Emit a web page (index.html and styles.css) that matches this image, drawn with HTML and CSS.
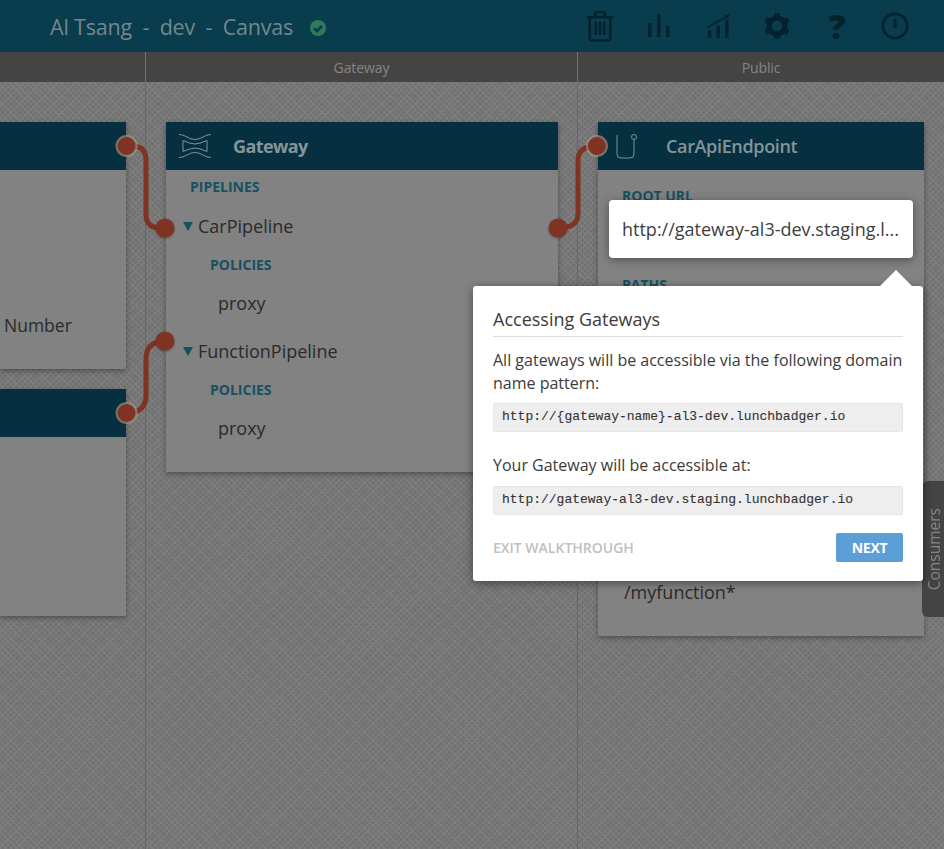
FILE: index.html
```html
<!DOCTYPE html>
<html lang="en">
<head>
<meta charset="UTF-8">
<title>Al Tsang - dev - Canvas</title>
<link rel="stylesheet" href="styles.css">
</head>
<body>

<header class="topbar">
    <div class="topbar-title">
        <span>Al Tsang</span><span>-</span><span>dev</span><span>-</span><span>Canvas</span>
        <svg class="status-icon" width="16" height="16" viewBox="0 0 16 16">
            <circle cx="8" cy="8" r="8" fill="#2f7a58"/>
            <path d="M4 8.200l3 3 5-5.400" fill="none" stroke="#093c4d" stroke-width="2.600"/>
        </svg>
    </div>
    <nav class="topbar-icons">
        <svg width="28" height="32" viewBox="0 0 30 34" fill="none" stroke="#04222e" stroke-width="2.800">
            <path d="M1 7.500h28M10 7V3.500q0-1.500 1.500-1.500h7q1.500 0 1.500 1.500V7M4 8v22q0 2.500 2.500 2.500h17q2.500 0 2.500-2.500V8"/>
            <path d="M10.500 12.500v14M15 12.500v14M19.500 12.500v14"/>
        </svg>
        <svg width="22" height="24" viewBox="0 0 22 24" fill="#04222e">
            <rect x="0" y="9" width="3.500" height="14"/>
            <rect x="9" y="0" width="3.500" height="23"/>
            <rect x="18" y="12" width="3.500" height="11"/>
        </svg>
        <svg class="icon-wide" width="23" height="25" viewBox="0 0 24 26" fill="#04222e">
            <rect x="1" y="17" width="3.500" height="8"/>
            <rect x="10" y="12" width="3.500" height="13"/>
            <rect x="19" y="6" width="3.500" height="19"/>
            <path d="M0 13L19 2.500l-1-1.500 6-.5-3 5-1-1.600L1 14.500z"/>
        </svg>
        <svg width="26" height="26" viewBox="0 0 28 28">
            <path d="M14 5.500a8.500 8.500 0 1 1 0 17a8.500 8.500 0 1 1 0-17z" fill="none" stroke="#04222e" stroke-width="5.500"/>
            <g fill="#04222e">
                <rect x="11" y="0" width="6" height="5" rx="1"/>
                <rect x="11" y="23" width="6" height="5" rx="1"/>
                <rect x="11" y="0" width="6" height="5" rx="1" transform="rotate(60 14 14)"/>
                <rect x="11" y="0" width="6" height="5" rx="1" transform="rotate(120 14 14)"/>
                <rect x="11" y="0" width="6" height="5" rx="1" transform="rotate(240 14 14)"/>
                <rect x="11" y="0" width="6" height="5" rx="1" transform="rotate(300 14 14)"/>
            </g>
        </svg>
        <span class="help-mark icon-wide">?</span>
        <svg width="28" height="28" viewBox="0 0 30 30" fill="none" stroke="#04222e" stroke-width="3">
            <circle cx="15" cy="15" r="13"/>
            <path d="M15 7.500v10" stroke-width="3.400"/>
        </svg>
    </nav>
</header>

<div class="zonebar">
    <div class="zone"></div>
    <div class="zone">Gateway</div>
    <div class="zone">Public</div>
</div>

<main class="canvas">
    <section class="column">
        <div class="card card-cut card-first">
            <div class="card-head"></div>
            <div class="card-body card-number">Number</div>
        </div>
        <div class="card card-cut card-second">
            <div class="card-head"></div>
        </div>
    </section>

    <section class="column">
        <div class="card card-gateway">
            <div class="card-head">
                <svg class="card-icon" width="34" height="26" viewBox="0 0 34 26" fill="none" stroke="#7f9299" stroke-width="1">
                    <path d="M1 1.500q4 0 8 2.500t8 2.500 8-2.500 8-2.500M1 24.500q4 0 8-2.500t8-2.500 8 2.500 8 2.500"/>
                    <path d="M5 7.500q8 3.500 12 3.500t12-3.500M5 18.500q8-3.500 12-3.500t12 3.500"/>
                    <path d="M5 7.500v11M29 7.500v11"/>
                </svg>
                <span class="card-name">Gateway</span>
            </div>
            <h4 class="section-label pipelines">PIPELINES</h4>
            <div class="pipeline"><span class="arrow"></span>CarPipeline</div>
            <h4 class="section-label policies">POLICIES</h4>
            <div class="policy">proxy</div>
            <div class="pipeline pipeline-next"><span class="arrow"></span>FunctionPipeline</div>
            <h4 class="section-label policies">POLICIES</h4>
            <div class="policy">proxy</div>
        </div>
    </section>

    <section class="column">
        <div class="card card-endpoint">
            <div class="card-head">
                <svg class="card-icon" width="22" height="26" viewBox="0 0 22 26" fill="none" stroke="#7f9299" stroke-width="1">
                    <path d="M1 2v19q0 4 4 4h9q4 0 4-4V7"/>
                    <circle cx="18" cy="4" r="2.500"/>
                </svg>
                <span class="card-name card-name-light">CarApiEndpoint</span>
            </div>
            <h4 class="section-label rooturl">ROOT URL</h4>
            <h4 class="section-label paths">PATHS</h4>
            <div class="path-value">/myfunction*</div>
        </div>
    </section>

    <svg class="wires" width="944" height="767" viewBox="0 0 944 767" fill="none">
        <g stroke="#7f3322" stroke-width="5">
            <path d="M127 64h5q14 0 14 14v54q0 14 14 14h5"/>
            <path d="M127 331q19 0 19-18v-36q0-18 20-18"/>
            <path d="M558 146q20 0 20-14V78q0-14 19-14"/>
        </g>
        <g fill="#7f3322">
            <circle class="pin-ring" cx="126.500" cy="64" r="10"/>
            <circle class="pin-soft" cx="165" cy="146" r="9.500"/>
            <circle class="pin-ring" cx="126.500" cy="331" r="10"/>
            <circle class="pin-soft" cx="165" cy="259" r="9.500"/>
            <circle class="pin-soft" cx="558" cy="146" r="9.500"/>
            <circle class="pin-ring" cx="597" cy="64" r="10"/>
        </g>
    </svg>

    <div class="consumers"><span>Consumers</span></div>

    <div class="url-spot">http://gateway-al3-dev.staging.l...</div>

    <div class="walkthrough">
        <span class="walkthrough-tip"></span>
        <h3 class="walkthrough-title">Accessing Gateways</h3>
        <p class="walkthrough-text">All gateways will be accessible via the following domain name pattern:</p>
        <code class="code-box">http://{gateway-name}-al3-dev.lunchbadger.io</code>
        <p class="walkthrough-text walkthrough-gap">Your Gateway will be accessible at:</p>
        <code class="code-box">http://gateway-al3-dev.staging.lunchbadger.io</code>
        <div class="walkthrough-foot">
            <span class="exit-link">EXIT WALKTHROUGH</span>
            <button type="button" class="next-btn">NEXT</button>
        </div>
    </div>
</main>

</body>
</html>
```

FILE: styles.css
```css
* {
    box-sizing: border-box;
}
html, body {
    height: 100%;
}
body {
    margin: 0;
    overflow: hidden;
    font-family: "Open Sans", sans-serif;
    background-color: #7a7a7a;
    display: flex;
    flex-direction: column;
}

/* top bar */
.topbar {
    height: 52px;
    flex: none;
    background-color: #093c4d;
    display: flex;
    align-items: center;
    justify-content: space-between;
    padding: 0 35px 0 50px;
}
.topbar-title {
    display: flex;
    align-items: center;
    gap: 10.500px;
    color: #75878e;
    font-size: 21.500px;
    letter-spacing: -.2px;
}
.status-icon {
    margin-left: 6px;
    margin-top: 3px;
}
.topbar-icons {
    display: flex;
    align-items: center;
    gap: 34px;
}
.icon-wide {
    margin-left: 3px;
}
.help-mark {
    color: #04222e;
    font-size: 34px;
    line-height: 1;
    font-weight: 800;
    width: 20px;
    text-align: center;
}

/* zones */
.zonebar {
    height: 30px;
    flex: none;
    background-color: #444;
    display: grid;
    grid-template-columns: 146px 432px 1fr;
}
.zone {
    border-right: 1px solid #717171;
    color: #858585;
    font-size: 14px;
    letter-spacing: -.1px;
    line-height: 31px;
    text-align: center;
}
.zone:last-child {
    border-right: 0;
}

/* canvas */
.canvas {
    position: relative;
    flex: 1;
    display: grid;
    grid-template-columns: 146px 432px 1fr;
    background-color: #727272;
    background-image:
        repeating-linear-gradient(45deg, #7e7e7e 0 1px, transparent 1px 4px),
        repeating-linear-gradient(-45deg, #7e7e7e 0 1px, transparent 1px 4px);
    overflow: hidden;
}
.column {
    border-right: 1px solid #666;
    padding: 40px 19px 0 20px;
}
.column:last-of-type {
    border-right: 0;
}

/* cards */
.card {
    background-color: #828282;
    box-shadow: 0 2px 5px rgba(0, 0, 0, .35);
    color: #2a2a2a;
}
.card-cut {
    margin-left: -20px;
}
.card-first {
    height: 247px;
}
.card-second {
    height: 227px;
    margin-top: 20px;
}
.card-gateway {
    height: 350px;
    padding-bottom: 10px;
}
.card-endpoint {
    height: 514px;
    width: 326px;
    position: relative;
}
.card-head {
    height: 48px;
    background-color: #063040;
    display: flex;
    align-items: center;
}
.card-icon {
    margin-left: 12px;
    flex: none;
}
.card-endpoint .card-icon {
    margin-left: 18px;
}
.card-name {
    margin-left: 21px;
    color: #84959b;
    font-size: 18px;
    font-weight: 700;
    letter-spacing: -.6px;
}
.card-name-light {
    margin-left: 28px;
    font-weight: 600;
    letter-spacing: -.35px;
}
.card-number {
    padding: 143px 0 0 4px;
    font-size: 17.500px;
}

.section-label {
    margin: 0;
    color: #17505f;
    font-size: 14px;
    font-weight: 700;
    line-height: 18px;
}
.pipelines {
    padding: 8px 0 0 24px;
}
.pipeline {
    margin-top: 18px;
    padding-left: 17px;
    font-size: 18px;
    line-height: 24px;
    display: flex;
    align-items: center;
    gap: 5px;
}
.pipeline-next {
    margin-top: 24px;
}
.arrow {
    width: 0;
    height: 0;
    border-left: 5.500px solid transparent;
    border-right: 5.500px solid transparent;
    border-top: 9px solid #17505f;
}
.policies {
    padding: 18px 0 0 44px;
}
.policy {
    margin-top: 17px;
    padding-left: 52px;
    font-size: 18px;
    line-height: 24px;
}
.rooturl {
    padding: 17px 0 0 24px;
}
.paths {
    padding: 71px 0 0 24px;
}
.path-value {
    position: absolute;
    left: 26px;
    top: 458px;
    font-size: 18px;
    line-height: 24px;
}

/* overlays on the canvas */
.wires {
    position: absolute;
    left: 0;
    top: 0;
    pointer-events: none;
}
.pin-ring {
    stroke: #a8a8a8;
    stroke-opacity: .55;
    stroke-width: 2;
}
.pin-soft {
    filter: drop-shadow(0 1px 1px rgba(0, 0, 0, .3));
}
.consumers {
    position: absolute;
    right: 0;
    top: 399px;
    width: 22px;
    height: 136px;
    background-color: #444;
    border-radius: 6px 0 0 6px;
    color: #858585;
    font-size: 15.500px;
    display: flex;
    align-items: center;
    justify-content: center;
}
.consumers span {
    writing-mode: vertical-rl;
    transform: rotate(180deg);
    margin-left: 2px;
}
.url-spot {
    position: absolute;
    left: 609px;
    top: 118px;
    width: 304px;
    height: 58px;
    background-color: #fff;
    border-radius: 4px;
    box-shadow: 0 2px 10px rgba(0, 0, 0, .4);
    color: #3e3e3e;
    font-size: 18px;
    line-height: 58px;
    padding-left: 13px;
    white-space: nowrap;
}
.walkthrough {
    position: absolute;
    left: 473px;
    top: 204px;
    width: 450px;
    height: 295px;
    background-color: #fff;
    border-radius: 3px;
    box-shadow: 0 2px 10px rgba(0, 0, 0, .45);
    padding: 18px 20px 0;
    color: #3b3b3b;
}
.walkthrough-tip {
    position: absolute;
    left: 407px;
    top: -16px;
    width: 0;
    height: 0;
    border-left: 16px solid transparent;
    border-right: 16px solid transparent;
    border-bottom: 16px solid #fff;
}
.walkthrough-title {
    margin: 0;
    font-size: 18px;
    font-weight: 400;
    line-height: 30px;
    height: 33px;
    border-bottom: 1px solid #ddd;
}
.walkthrough-text {
    margin: 12px 0 8px;
    font-size: 16px;
    line-height: 23px;
}
.walkthrough-gap {
    margin: 22px 0 9px;
}
.code-box {
    display: block;
    height: 29px;
    background-color: #eee;
    border-radius: 2px;
    border: 1px solid #e6e6e6;
    font-family: "Liberation Mono", monospace;
    font-size: 13px;
    line-height: 26px;
    padding-left: 8px;
    color: #333;
    -webkit-text-stroke: .1px #333;
}
.walkthrough-foot {
    display: flex;
    align-items: center;
    justify-content: space-between;
    margin-top: 18px;
}
.exit-link {
    color: #c0c0c0;
    font-size: 14px;
    font-weight: 600;
    letter-spacing: 0;
}
.next-btn {
    width: 67px;
    height: 29px;
    border: 0;
    border-radius: 2px;
    background-color: #5b9fd6;
    color: #fff;
    font-family: "Open Sans", sans-serif;
    font-size: 14px;
    font-weight: 700;
    letter-spacing: -.3px;
    padding: 0;
}
```
